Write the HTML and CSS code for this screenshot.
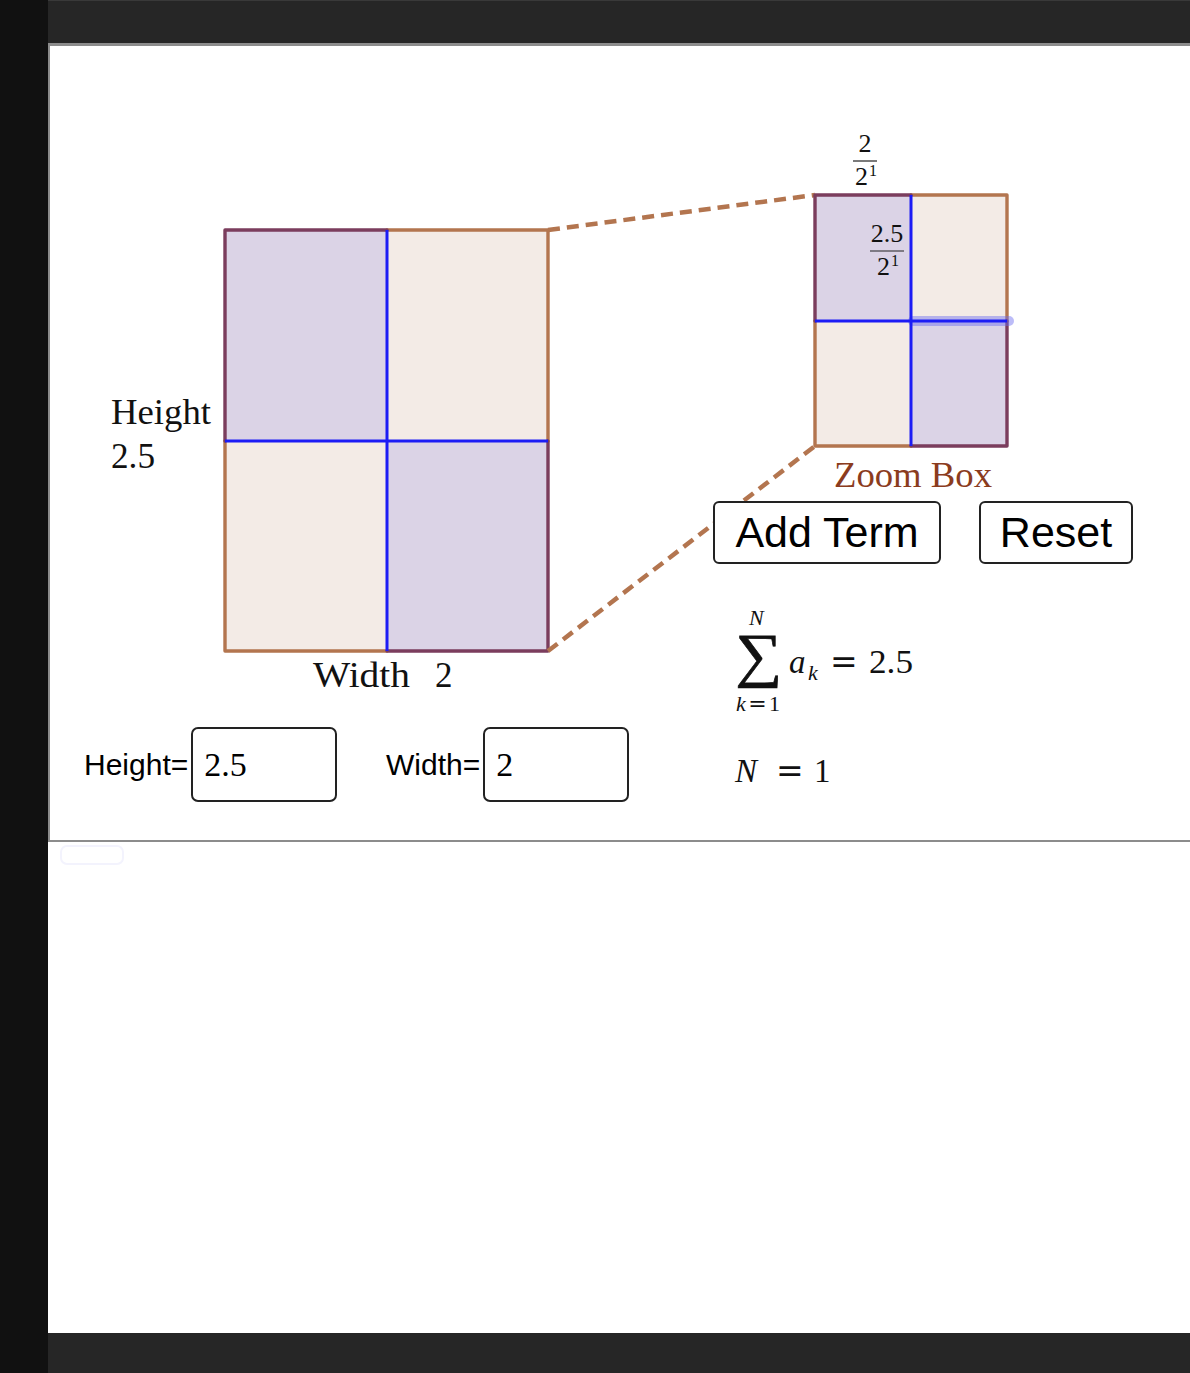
FILE: index.html
```html
<!DOCTYPE html>
<html>
<head>
<meta charset="utf-8">
<link rel="stylesheet" href="styles.css">
</head>
<body>
<div class="page">
  <div class="side"></div>
  <div class="main">
    <div class="topbar"></div>
    <div class="applet">
      <svg class="canvas" width="1140" height="794" viewBox="50 46 1140 794" xmlns="http://www.w3.org/2000/svg">
        <!-- big rectangle quads -->
        <rect class="fill-beige" x="387" y="230" width="161" height="211"/>
        <rect class="fill-beige" x="225" y="441" width="162" height="210"/>
        <rect class="fill-purple" x="225" y="230" width="162" height="211"/>
        <rect class="fill-purple" x="387" y="441" width="161" height="210"/>
        <polyline class="st-brown" points="387,230 548,230 548,441"/>
        <polyline class="st-brown" points="225,441 225,651 387,651"/>
        <polyline class="st-purple" points="387,230 225,230 225,441"/>
        <polyline class="st-purple" points="548,441 548,651 387,651"/>
        <line class="st-blue" x1="387" y1="230" x2="387" y2="651"/>
        <line class="st-blue" x1="225" y1="441" x2="548" y2="441"/>

        <!-- dashed connectors -->
        <line class="st-dash" x1="548" y1="230" x2="815" y2="195"/>
        <line class="st-dash" x1="548" y1="651" x2="815" y2="446"/>

        <!-- zoom box quads -->
        <rect class="fill-beige" x="911" y="195" width="96" height="126"/>
        <rect class="fill-beige" x="815" y="321" width="96" height="125"/>
        <rect class="fill-purple" x="815" y="195" width="96" height="126"/>
        <rect class="fill-purple" x="911" y="321" width="96" height="125"/>
        <polyline class="st-brown" points="911,195 1007,195 1007,321"/>
        <polyline class="st-brown" points="815,321 815,446 911,446"/>
        <polyline class="st-purple" points="911,195 815,195 815,321"/>
        <polyline class="st-purple" points="1007,321 1007,446 911,446"/>
        <line class="st-glow" x1="913" y1="321" x2="1009" y2="321"/>
        <line class="st-blue" x1="911" y1="195" x2="911" y2="446"/>
        <line class="st-blue" x1="815" y1="321" x2="1007" y2="321"/>

        <!-- labels -->
        <text class="serif lbl" x="111" y="424" textLength="100" lengthAdjust="spacingAndGlyphs">Height</text>
        <text class="serif lbl" x="111" y="468" textLength="44" lengthAdjust="spacingAndGlyphs">2.5</text>
        <text class="serif lbl" x="313" y="687" textLength="97" lengthAdjust="spacingAndGlyphs">Width</text>
        <text class="serif lbl" x="435" y="687">2</text>
        <text class="serif lbl zoom" x="834" y="487" textLength="158" lengthAdjust="spacingAndGlyphs">Zoom Box</text>

        <!-- fractions -->
        <text class="serif frac" x="865" y="152" text-anchor="middle">2</text>
        <line class="st-bar" x1="853" y1="161" x2="877" y2="161"/>
        <text class="serif frac" x="855" y="185">2</text>
        <text class="serif sup" x="869" y="176">1</text>

        <text class="serif frac" x="887" y="242" text-anchor="middle">2.5</text>
        <line class="st-bar" x1="870" y1="251" x2="904" y2="251"/>
        <text class="serif frac" x="877" y="275">2</text>
        <text class="serif sup" x="891" y="266">1</text>

        <!-- sum -->
        <text class="serif sigma" x="735" y="675" textLength="47" lengthAdjust="spacingAndGlyphs">∑</text>
        <text class="serif small it" x="749" y="625">N</text>
        <text class="serif small" x="736" y="711" textLength="44" lengthAdjust="spacing"><tspan class="it">k</tspan><tspan class="eq">=</tspan>1</text>
        <text class="serif math it" x="789" y="673">a</text>
        <text class="serif small it" x="808" y="680">k</text>
        <text class="serif math eq" x="830" y="673">=</text>
        <text class="serif math" x="869" y="673" textLength="44" lengthAdjust="spacingAndGlyphs">2.5</text>

        <text class="serif math it" x="735" y="782">N</text>
        <text class="serif math eq" x="776" y="782">=</text>
        <text class="serif math" x="814" y="782">1</text>
      </svg>

      <button class="btn btn-add">Add Term</button>
      <button class="btn btn-reset">Reset</button>

      <div class="field field-h">
        <span class="field-label">Height=</span>
        <span class="field-box">2.5</span>
      </div>
      <div class="field field-w">
        <span class="field-label">Width=</span>
        <span class="field-box">2</span>
      </div>
    </div>
    <div class="below">
      <div class="chip"></div>
    </div>
    <div class="bottombar"></div>
  </div>
</div>
</body>
</html>
```

FILE: styles.css
```css
html, body {
  margin: 0;
  padding: 0;
  background: #111111;
}

.page {
  display: flex;
  width: 1190px;
  height: 1373px;
}

.side {
  width: 48px;
  flex: 0 0 48px;
  background: #111111;
}

.main {
  flex: 1;
  display: flex;
  flex-direction: column;
  min-width: 0;
}

.topbar {
  height: 43px;
  flex: 0 0 43px;
  box-sizing: border-box;
  background: #262626;
  border-top: 1px solid #393939;
}

.applet {
  position: relative;
  height: 794px;
  flex: 0 0 794px;
  background: #ffffff;
  border-top: 3px solid #8c8c8c;
  border-left: 2px solid #8c8c8c;
  border-bottom: 2px solid #8c8c8c;
  overflow: hidden;
}

.canvas {
  display: block;
}

.below {
  flex: 1;
  background: #ffffff;
  padding: 3px 0 0 12px;
}

.chip {
  width: 60px;
  height: 16px;
  border: 2px solid #f3f3fd;
  border-radius: 7px;
}

.bottombar {
  height: 40px;
  flex: 0 0 40px;
  background: #262626;
}

/* canvas drawing styles */
.fill-beige { fill: #f3ebe6; }
.fill-purple { fill: #dbd3e6; }

.st-brown {
  fill: none;
  stroke: #b3754f;
  stroke-width: 3.4;
  stroke-linejoin: round;
  stroke-linecap: round;
}

.st-purple {
  fill: none;
  stroke: #7b3d5d;
  stroke-width: 3.4;
  stroke-linejoin: round;
  stroke-linecap: round;
}

.st-blue {
  stroke: #1c1cf5;
  stroke-width: 3;
}

.st-glow {
  stroke: #6a6af0;
  stroke-opacity: 0.45;
  stroke-width: 10;
  stroke-linecap: round;
}

.st-dash {
  stroke: #b3754f;
  stroke-width: 4.5;
  stroke-dasharray: 12 7;
}

.st-bar {
  stroke: #222;
  stroke-width: 1.2;
}

.serif {
  font-family: "Liberation Serif", "DejaVu Serif", serif;
  fill: #111;
}

.lbl { font-size: 35px; }
.zoom { fill: #8b3c1e; }
.frac { font-size: 26px; }
.sup { font-size: 16px; }
.sigma {
  font-size: 60px;
  stroke: #111;
  stroke-width: 0.7;
}
.small { font-size: 22px; }
.math { font-size: 33px; }
.it { font-style: italic; }
.eq { font-family: "DejaVu Serif", serif; }

/* widgets on the applet canvas */
.btn {
  position: absolute;
  top: 455px;
  height: 63px;
  box-sizing: border-box;
  background: #ffffff;
  border: 2px solid #222222;
  border-radius: 6px;
  font-family: "Liberation Sans", Arial, sans-serif;
  font-size: 43px;
  color: #000;
  padding: 0;
  line-height: 1;
}

.btn-add {
  left: 663px;
  width: 228px;
}

.btn-reset {
  left: 929px;
  width: 154px;
}

.field {
  position: absolute;
  top: 681px;
  display: flex;
  align-items: center;
  gap: 3px;
}

.field-h { left: 34px; }
.field-w { left: 336px; }

.field-label {
  font-family: "Liberation Sans", Arial, sans-serif;
  font-size: 30px;
  color: #000;
}

.field-box {
  width: 146px;
  height: 75px;
  box-sizing: border-box;
  border: 2px solid #222222;
  border-radius: 7px;
  font-family: "Liberation Serif", "DejaVu Serif", serif;
  font-size: 34px;
  padding-left: 11px;
  display: flex;
  align-items: center;
}
```
